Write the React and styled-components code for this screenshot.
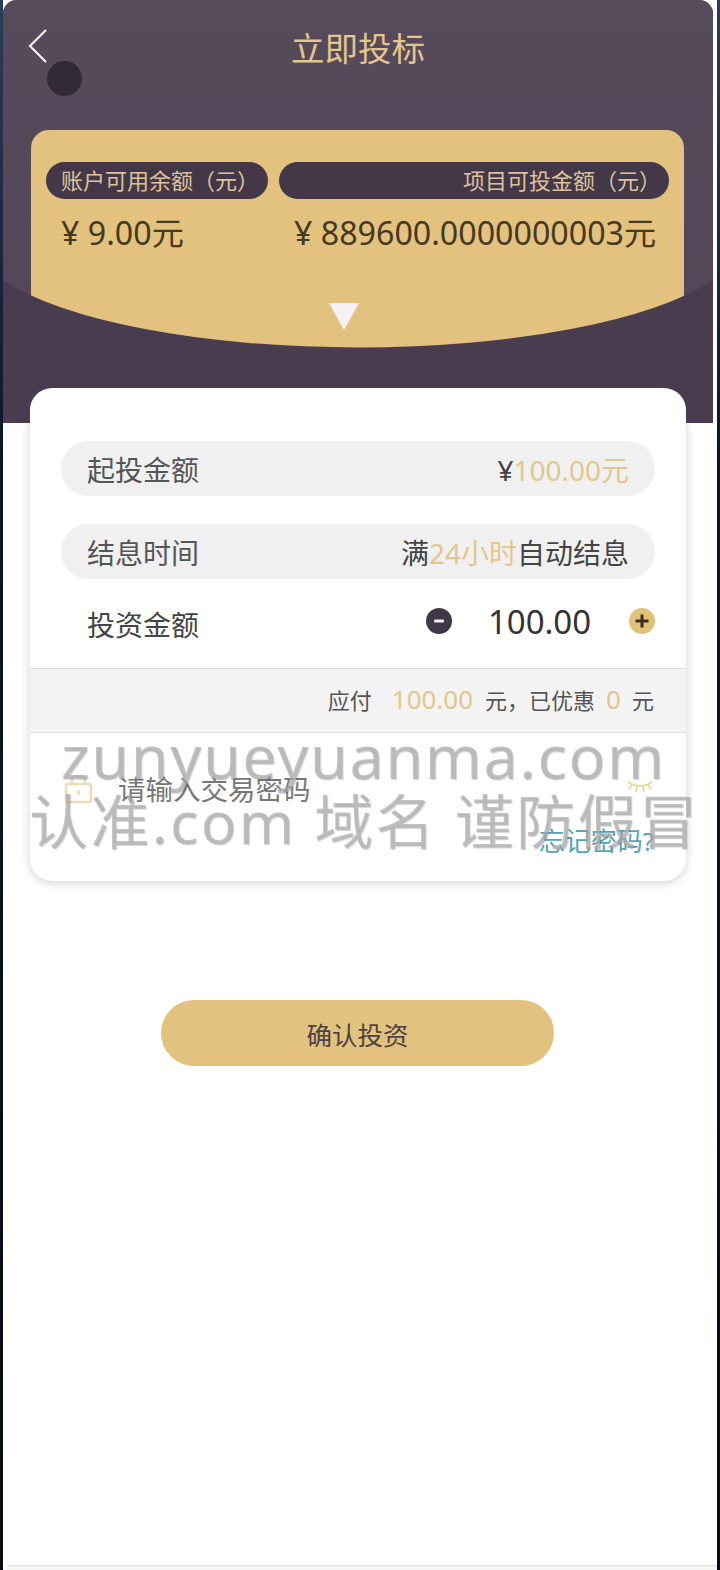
import styled, { createGlobalStyle } from 'styled-components';

const GlobalStyle = createGlobalStyle`
  html, body {
    margin: 0;
    padding: 0;
    background: linear-gradient(to bottom, #2c3c5c, #0b1526 30%, #060d18);
  }
  body {
    font-family: "Noto Sans", "Noto Sans CJK SC", sans-serif;
    overflow: hidden;
  }
  * { box-sizing: border-box; }
`;

const Screen = styled.div`
  position: relative;
  margin-left: 3px;
  width: 714px;
  height: 1570px;
  background: #fff;
  display: flex;
  flex-direction: column;
`;

const Header = styled.header`
  width: 710px;
  height: 423px;
  background: #4a3c4f;
  border-radius: 14px 14px 0 0;
  overflow: hidden;
  flex-shrink: 0;
`;

const TopArc = styled.div`
  height: 348px;
  background: linear-gradient(to bottom, #564a5b, #534658);
  clip-path: path('M0 0H710V280A385 110 0 0 1 0 280Z');
`;

const TopBar = styled.div`
  height: 96px;
  margin-bottom: 34px;
  display: grid;
  grid-template-columns: 1fr auto 1fr;
  align-items: center;
`;

const BackIcon = styled.svg`
  width: 20px;
  height: 36px;
  margin-left: 25px;
  margin-top: -4px;
  fill: none;
  stroke: #f2efef;
  stroke-width: 2.2;
`;

const Title = styled.h1`
  margin: -4px 0 0;
  font-size: 33.5px;
  font-weight: 400;
  color: #e3c58e;
`;

const GoldCard = styled.section`
  margin-left: 28px;
  width: 653px;
  height: 230px;
  padding: 32px 15px 0;
  background: #e2c27e;
  border-radius: 18px 18px 0 0;
  display: flex;
  flex-direction: column;
`;

const BalanceGrid = styled.div`
  display: grid;
  grid-template-columns: 222px 390px;
  column-gap: 11px;
`;

const BalancePill = styled.div`
  height: 37px;
  border-radius: 19px;
  background: #443748;
  color: #dcc39b;
  font-size: 22px;
  line-height: 37px;
  padding: 0 ${(p) => (p.$right ? '8px' : '0')} 0 ${(p) => (p.$right ? '0' : '15px')};
  text-align: ${(p) => (p.$right ? 'right' : 'left')};
  white-space: nowrap;
`;

const BalanceValue = styled.div`
  margin-top: 11px;
  padding-left: 15px;
  font-size: 32.2px;
  line-height: 46px;
  color: #47391f;
  white-space: nowrap;
`;

const Triangle = styled.div`
  margin: 47px 0 0 283px;
  width: 0;
  height: 0;
  border-left: 15px solid transparent;
  border-right: 15px solid transparent;
  border-top: 27px solid #f4f2f4;
`;

const FloatDot = styled.div`
  position: absolute;
  left: 44px;
  top: 61px;
  width: 35px;
  height: 35px;
  border-radius: 50%;
  background: #332a38;
`;

const Card = styled.section`
  margin: -35px 0 0 27px;
  width: 656px;
  height: 493px;
  background: #fff;
  border-radius: 22px;
  box-shadow: 0 2px 10px rgba(70, 70, 80, 0.24);
  padding-top: 53px;
  position: relative;
  flex-shrink: 0;
`;

const InfoPill = styled.div`
  margin: 0 31px 28px;
  height: 55px;
  border-radius: 28px;
  background: #f0f0f0;
  padding: 0 26px;
  display: flex;
  justify-content: space-between;
  align-items: center;
  font-size: 28px;
  color: #555;
  white-space: nowrap;
`;

const InfoValue = styled.span`
  color: #444;
`;

const Gold = styled.span`
  color: #e3c68c;
`;

const AmountRow = styled.div`
  margin: -28px 31px 5px 0;
  height: 84px;
  display: flex;
  align-items: center;
  padding-left: 57px;
  font-size: 28px;
  color: #444;
`;

const AmountLabel = styled.span`
  flex: 1;
  padding-top: 6px;
`;

const StepButton = styled.span`
  width: 26px;
  height: 26px;
  border-radius: 50%;
  background: ${(p) => (p.$plus ? '#e0c279' : '#3f3848')};
  display: flex;
`;

const AmountValue = styled.span`
  width: 177px;
  text-align: center;
  font-size: 33px;
  color: #333;
  padding-right: 2px;
`;

const PayBand = styled.div`
  height: 65px;
  background: #f3f3f3;
  border-top: 1px solid #ddd;
  border-bottom: 1px solid #ddd;
  padding: 0 32px 4px 0;
  display: flex;
  justify-content: flex-end;
  align-items: center;
  font-size: 22px;
  color: #555;
  white-space: nowrap;
`;

const PayNumber = styled.span`
  color: #e3c68c;
  font-size: 26px;
  margin: 0 ${(p) => p.$gap || 12}px 0 ${(p) => p.$gap || 20}px;
`;

const PasswordRow = styled.div`
  margin-top: 35px;
  padding: 0 33px 0 34px;
  display: flex;
  align-items: center;
  height: 40px;
`;

const LockIcon = styled.svg`
  width: 29px;
  height: 31px;
  fill: none;
  stroke: #ecdcb8;
  stroke-width: 2.5;
`;

const Placeholder = styled.span`
  flex: 1;
  margin-left: 25px;
  font-size: 27.5px;
  color: #777;
`;

const EyeIcon = styled.svg`
  width: 26px;
  height: 16px;
  margin-top: -2px;
  fill: none;
  stroke: #e6d592;
  stroke-width: 1.6;
`;

const ForgotLink = styled.a`
  display: block;
  margin: 15px 32px 0 0;
  text-align: right;
  font-size: 26px;
  line-height: 36px;
  color: #54a3b8;
`;

const ConfirmButton = styled.button`
  margin: 119px 0 0 158px;
  width: 393px;
  height: 66px;
  border: none;
  border-radius: 33px;
  background: #e2c27e;
  color: #4d4141;
  font-family: inherit;
  font-size: 25.5px;
  flex-shrink: 0;
`;

const BottomBar = styled.div`
  margin: auto 0 0 4px;
  height: 5px;
  background: #f6f6f6;
  border-top: 1px solid #ddd;
`;

const Watermark = styled.div`
  position: absolute;
  left: 0;
  top: 720px;
  width: 714px;
  pointer-events: none;
  color: rgba(175, 175, 175, 0.72);
  text-shadow: 1px 1px 1px rgba(0, 0, 0, 0.16);
  white-space: nowrap;
`;

const WatermarkLine = styled.div`
  font-size: ${(p) => p.$size}px;
  line-height: ${(p) => p.$height}px;
  letter-spacing: ${(p) => p.$spacing}px;
  padding-left: ${(p) => p.$left}px;
`;

export default function App() {
  return (
    <Screen>
      <GlobalStyle />
      <Header>
        <TopArc>
          <TopBar>
            <BackIcon viewBox="0 0 20 36">
              <path d="M18 2 L2 18 L18 34" />
            </BackIcon>
            <Title>立即投标</Title>
          </TopBar>
          <GoldCard>
            <BalanceGrid>
              <BalancePill>账户可用余额（元）</BalancePill>
              <BalancePill $right>项目可投金额（元）</BalancePill>
              <BalanceValue>¥ 9.00元</BalanceValue>
              <BalanceValue>¥ 889600.0000000003元</BalanceValue>
            </BalanceGrid>
            <Triangle />
          </GoldCard>
        </TopArc>
      </Header>
      <FloatDot />

      <Card>
        <InfoPill>
          <span>起投金额</span>
          <InfoValue>¥<Gold>100.00元</Gold></InfoValue>
        </InfoPill>
        <InfoPill>
          <span>结息时间</span>
          <InfoValue>满<Gold>24小时</Gold>自动结息</InfoValue>
        </InfoPill>
        <AmountRow>
          <AmountLabel>投资金额</AmountLabel>
          <StepButton>
            <svg width="26" height="26" viewBox="0 0 26 26">
              <rect x="8" y="11.5" width="10" height="3" rx="1" fill="#f2f2f2" />
            </svg>
          </StepButton>
          <AmountValue>100.00</AmountValue>
          <StepButton $plus>
            <svg width="26" height="26" viewBox="0 0 26 26">
              <path d="M13 6.5V19.5M6.5 13H19.5" stroke="#3a3020" strokeWidth="3" />
            </svg>
          </StepButton>
        </AmountRow>
        <PayBand>
          应付
          <PayNumber>100.00</PayNumber>
          元，已优惠
          <PayNumber $gap={11}>0</PayNumber>
          元
        </PayBand>
        <PasswordRow>
          <LockIcon viewBox="0 0 29 31">
            <path d="M8 11V7A4 4 0 0 1 12 3H17A4 4 0 0 1 21 7V11" />
            <rect x="2" y="11" width="25" height="18" rx="2" />
            <path d="M14.5 17V22" />
          </LockIcon>
          <Placeholder>请输入交易密码</Placeholder>
          <EyeIcon viewBox="0 0 26 16">
            <path d="M1 3 Q13 11 25 3" />
            <path d="M5 6 L2 10 M10 8 L9 13 M16 8 L17 13 M21 6 L24 10" />
          </EyeIcon>
        </PasswordRow>
        <ForgotLink>忘记密码?</ForgotLink>
      </Card>

      <ConfirmButton>确认投资</ConfirmButton>
      <BottomBar />

      <Watermark>
        <WatermarkLine $size={61} $height={72} $spacing={1.7} $left={58}>zunyueyuanma.com</WatermarkLine>
        <WatermarkLine $size={59} $height={58} $spacing={2.4} $left={26}>认准.com 域名 谨防假冒</WatermarkLine>
      </Watermark>
    </Screen>
  );
}
